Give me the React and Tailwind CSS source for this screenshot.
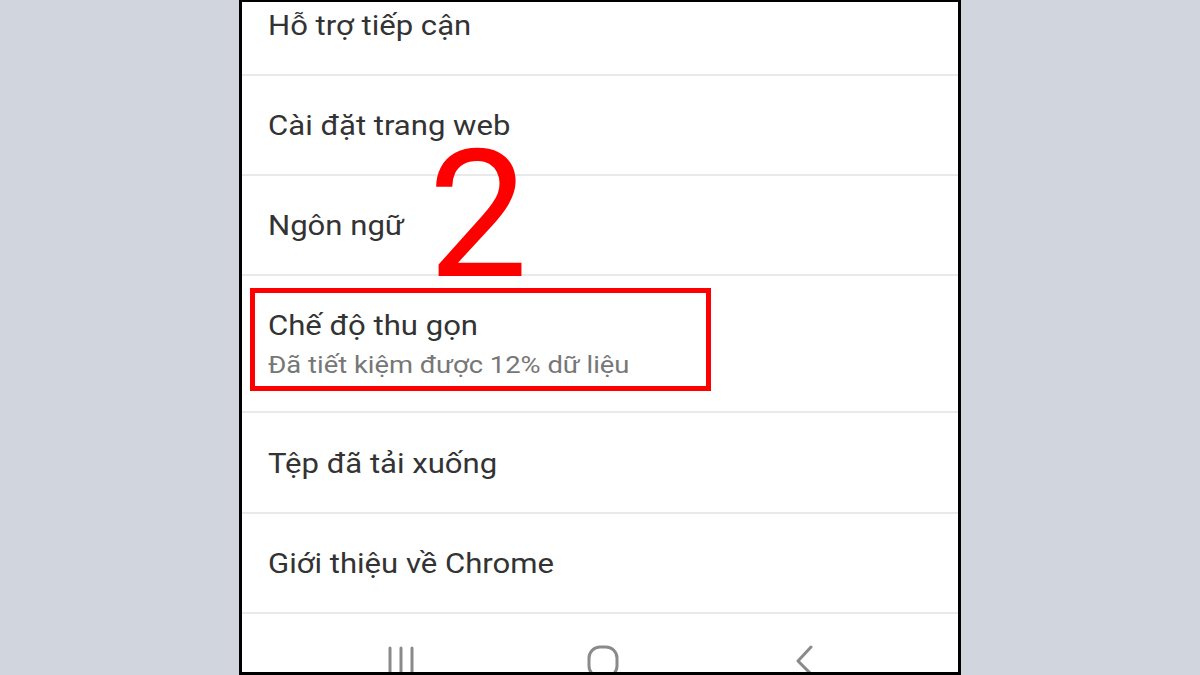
import React from 'react'

const rows = [
  { title: 'Hỗ trợ tiếp cận', h: 'h-[100px]' },
  { title: 'Cài đặt trang web', h: 'h-[100px]' },
  { title: 'Ngôn ngữ', h: 'h-[100px]' },
  { title: 'Chế độ thu gọn', sub: 'Đã tiết kiệm được 12% dữ liệu', h: 'h-[137px]', boxed: true },
  { title: 'Tệp đã tải xuống', h: 'h-[101px]' },
  { title: 'Giới thiệu về Chrome', h: 'h-[100px]' },
]

function NavBar() {
  return (
    <div className="flex-1 flex justify-center items-start pt-[31px] pl-[5px] gap-[142px] overflow-hidden">
      <div className="w-[60px] flex justify-center">
        <svg width="30" height="34" viewBox="0 0 30 34">
          <g stroke="#8a8a8a" strokeWidth="3" strokeLinecap="round">
            <line x1="4" y1="3" x2="4" y2="34" />
            <line x1="15" y1="3" x2="15" y2="34" />
            <line x1="26" y1="3" x2="26" y2="34" />
          </g>
        </svg>
      </div>
      <div className="w-[60px] flex justify-center">
        <svg width="32" height="34" viewBox="0 0 32 34">
          <rect x="2" y="2" width="28" height="30" rx="11" fill="none" stroke="#8a8a8a" strokeWidth="3" />
        </svg>
      </div>
      <div className="w-[60px] flex justify-center">
        <svg width="20" height="34" viewBox="0 0 20 34">
          <polyline points="16,2 3,16 16,29" fill="none" stroke="#8a8a8a" strokeWidth="3" strokeLinecap="round" strokeLinejoin="round" />
        </svg>
      </div>
    </div>
  )
}

export default function App() {
  return (
    <div className="w-[1200px] h-[675px] bg-[#d1d5dd] flex justify-center overflow-hidden" style={{ fontFamily: 'Roboto, "Noto Sans", sans-serif' }}>
      <div className="relative w-[722px] h-[675px] bg-white border-x-[3px] border-t-2 border-b-[3px] border-black flex flex-col overflow-hidden">
        <div className="mt-[-26px] flex flex-col">
          {rows.map((row, i) => (
            <div key={i} className={`${row.h} relative flex flex-col justify-center pl-[26px] border-b-2 border-[#e9e9e9]`}>
              <div className="text-[28px] leading-[34px] text-[#333333] origin-left scale-x-[1.11] pt-[2px]">{row.title}</div>
              {row.sub && (
                <div className="text-[23px] leading-[30px] text-[#777777] mt-[8px] origin-left scale-x-[1.19]">{row.sub}</div>
              )}
              {row.boxed && (
                <div className="absolute left-[8px] top-[12px] w-[461px] h-[103px] border-[5px] border-[#ff0000]"></div>
              )}
            </div>
          ))}
        </div>
        <NavBar />
        <div className="absolute left-[186px] top-[113px] text-[178px] leading-[200px] text-[#ff0000]">2</div>
      </div>
    </div>
  )
}
